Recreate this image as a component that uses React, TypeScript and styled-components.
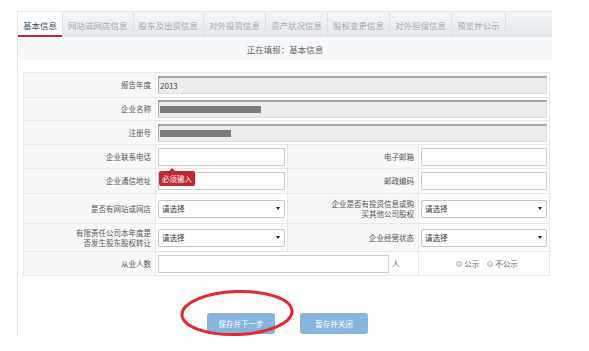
import styled, { createGlobalStyle } from "styled-components"

const GlobalStyle = createGlobalStyle`
    html, body {
        margin: 0;
        padding: 0;
        background: #ffffff;
    }
    body {
        font-family: "Noto Sans CJK SC", "Noto Sans", sans-serif;
        color: #555555;
    }
`

const Page = styled.div`
    position: relative;
    width: 589px;
    height: 351px;
    overflow: hidden;
    padding-top: 11px;
    box-sizing: border-box;
`

const Panel = styled.div`
    margin-left: 17px;
    width: 535px;
    height: 326px;
    border-left: 1px solid #dfe5ea;
    box-sizing: border-box;
`

const TabBar = styled.div`
    display: flex;
    height: 26px;
    border-top: 1px solid #e3e7eb;
    box-sizing: border-box;
    background: linear-gradient(#f5f7f9, #e3e7eb);
`

const Tab = styled.div<{ $active?: boolean }>`
    display: flex;
    align-items: center;
    padding: 0 5px;
    font-size: 8.5px;
    white-space: nowrap;
    color: ${p => (p.$active ? "#3d5266" : "#a3a9b0")};
    background: ${p => (p.$active ? "#ffffff" : "transparent")};
    border-right: 1px solid #dde2e7;
    box-shadow: ${p => (p.$active ? "inset 0 -2px 0 #c1272d" : "none")};
`

const SubHeader = styled.div`
    height: 23px;
    display: flex;
    align-items: center;
    justify-content: center;
    background: #f6f8fa;
    font-size: 8.5px;
    color: #666666;
`

const FormArea = styled.div`
    padding: 12px 3px 0 5px;
`

const Table = styled.div`
    border-top: 1px solid #e8e8e8;
    border-left: 1px solid #e8e8e8;
    width: 526px;
`

const Row = styled.div<{ $h: number }>`
    display: grid;
    grid-template-columns: 132px 132px 131px 131px;
    height: ${p => p.$h}px;
`

const Label = styled.div`
    display: flex;
    align-items: center;
    justify-content: flex-end;
    text-align: right;
    padding-right: 4px;
    background: #f8f8f8;
    border-right: 1px solid #e8e8e8;
    border-bottom: 1px solid #e8e8e8;
    font-size: 7.5px;
    line-height: 10px;
    color: #555555;
`

const Value = styled.div<{ $span?: number; $center?: boolean }>`
    position: relative;
    grid-column: span ${p => p.$span ?? 1};
    display: flex;
    align-items: center;
    justify-content: ${p => (p.$center ? "center" : "flex-start")};
    padding: 0 2px 0 2px;
    background: #ffffff;
    border-right: 1px solid #e8e8e8;
    border-bottom: 1px solid #e8e8e8;
    font-size: 7.5px;
    color: #555555;
`

const ReadOnlyField = styled.div`
    flex: 1;
    height: 18px;
    display: flex;
    align-items: center;
    box-sizing: border-box;
    padding-left: 1px;
    background: #ececec;
    border: 1px solid #dedede;
    border-top: 2px solid #a3a3a3;
    border-left: 1px solid #a3a3a3;
    font-size: 8px;
    color: #444444;
`

const Masked = styled.span<{ $w: number }>`
    display: block;
    width: ${p => p.$w}px;
    height: 7px;
    background: #7b7b7b;
`

const TextField = styled.div<{ $w?: number }>`
    width: ${p => (p.$w ? `${p.$w}px` : "auto")};
    flex: ${p => (p.$w ? "none" : "1")};
    height: 18px;
    box-sizing: border-box;
    background: #ffffff;
    border: 1px solid #cccccc;
`

const Select = styled.div`
    flex: 1;
    height: 18px;
    box-sizing: border-box;
    display: flex;
    align-items: center;
    justify-content: space-between;
    padding: 0 4px 0 3px;
    background: #ffffff;
    border: 1px solid #c4c4c4;
    border-radius: 2px;
    font-size: 7.5px;
    color: #333333;
`

const Arrow = styled.span`
    width: 0;
    height: 0;
    border-left: 2px solid transparent;
    border-right: 2px solid transparent;
    border-top: 3px solid #222222;
`

const Unit = styled.span`
    margin-left: 3px;
    font-size: 7.5px;
    color: #555555;
`

const Tip = styled.div`
    position: absolute;
    top: 26px;
    left: 3px;
    z-index: 2;
    height: 15px;
    padding: 0 3px;
    display: flex;
    align-items: center;
    background: #c7252c;
    color: #ffffff;
    font-size: 7.5px;
    border-radius: 2px;
    &::before {
        content: "";
        position: absolute;
        top: -3px;
        left: 10px;
        border-left: 3px solid transparent;
        border-right: 3px solid transparent;
        border-bottom: 3px solid #c7252c;
    }
`

const RadioGroup = styled.div`
    display: flex;
    align-items: center;
    gap: 8px;
    margin-left: 6px;
`

const RadioItem = styled.label`
    display: flex;
    align-items: center;
    gap: 2px;
    font-size: 7.5px;
    color: #666666;
`

const RadioDot = styled.span`
    width: 6px;
    height: 6px;
    border-radius: 50%;
    border: 1px solid #b5b5b5;
    background: radial-gradient(circle at 40% 35%, #ffffff, #cfcfcf);
    box-sizing: border-box;
`

const ButtonBar = styled.div`
    display: flex;
    justify-content: center;
    gap: 25px;
    margin-top: 37px;
    padding-left: 3px;
`

const Button = styled.button`
    width: 68px;
    height: 21px;
    border: none;
    border-radius: 3px;
    background: #84b5de;
    color: #ffffff;
    font-family: inherit;
    font-size: 7.5px;
    padding: 0;
    cursor: pointer;
`

const Mark = styled.svg`
    position: absolute;
    left: 178px;
    top: 287px;
    pointer-events: none;
`

const tabs = [
    "基本信息",
    "网站或网店信息",
    "股东及出资信息",
    "对外投资信息",
    "资产状况信息",
    "股权变更信息",
    "对外担保信息",
    "预览并公示",
]

const Choose = () => (
    <Select>
        请选择
        <Arrow />
    </Select>
)

export default function App() {
    return (
        <Page>
            <GlobalStyle />
            <Panel>
                <TabBar>
                    {tabs.map((t, i) => (
                        <Tab key={t} $active={i === 0}>{t}</Tab>
                    ))}
                </TabBar>
                <SubHeader>正在填报：基本信息</SubHeader>
                <FormArea>
                    <Table>
                        <Row $h={25}>
                            <Label>报告年度</Label>
                            <Value $span={3}><ReadOnlyField>2013</ReadOnlyField></Value>
                        </Row>
                        <Row $h={23}>
                            <Label>企业名称</Label>
                            <Value $span={3}><ReadOnlyField><Masked $w={101} /></ReadOnlyField></Value>
                        </Row>
                        <Row $h={24}>
                            <Label>注册号</Label>
                            <Value $span={3}><ReadOnlyField><Masked $w={71} /></ReadOnlyField></Value>
                        </Row>
                        <Row $h={24}>
                            <Label>企业联系电话</Label>
                            <Value>
                                <TextField />
                                <Tip>必须输入</Tip>
                            </Value>
                            <Label>电子邮箱</Label>
                            <Value><TextField /></Value>
                        </Row>
                        <Row $h={25}>
                            <Label>企业通信地址</Label>
                            <Value><TextField /></Value>
                            <Label>邮政编码</Label>
                            <Value><TextField /></Value>
                        </Row>
                        <Row $h={30}>
                            <Label>是否有网站或网店</Label>
                            <Value><Choose /></Value>
                            <Label>企业是否有投资信息或购<br />买其他公司股权</Label>
                            <Value><Choose /></Value>
                        </Row>
                        <Row $h={28}>
                            <Label>有限责任公司本年度是<br />否发生股东股权转让</Label>
                            <Value><Choose /></Value>
                            <Label>企业经营状态</Label>
                            <Value><Choose /></Value>
                        </Row>
                        <Row $h={24}>
                            <Label>从业人数</Label>
                            <Value $span={2}>
                                <TextField $w={231} />
                                <Unit>人</Unit>
                            </Value>
                            <Value $center>
                                <RadioGroup>
                                    <RadioItem><RadioDot />公示</RadioItem>
                                    <RadioItem><RadioDot />不公示</RadioItem>
                                </RadioGroup>
                            </Value>
                        </Row>
                    </Table>
                    <ButtonBar>
                        <Button>保存并下一步</Button>
                        <Button>暂存并关闭</Button>
                    </ButtonBar>
                </FormArea>
            </Panel>
            <Mark width="120" height="54" viewBox="0 0 120 54">
                <ellipse cx="59" cy="26" rx="55" ry="21.5" fill="none" stroke="#e8262b" strokeWidth="3" transform="rotate(-2 59 26)" />
            </Mark>
        </Page>
    )
}
